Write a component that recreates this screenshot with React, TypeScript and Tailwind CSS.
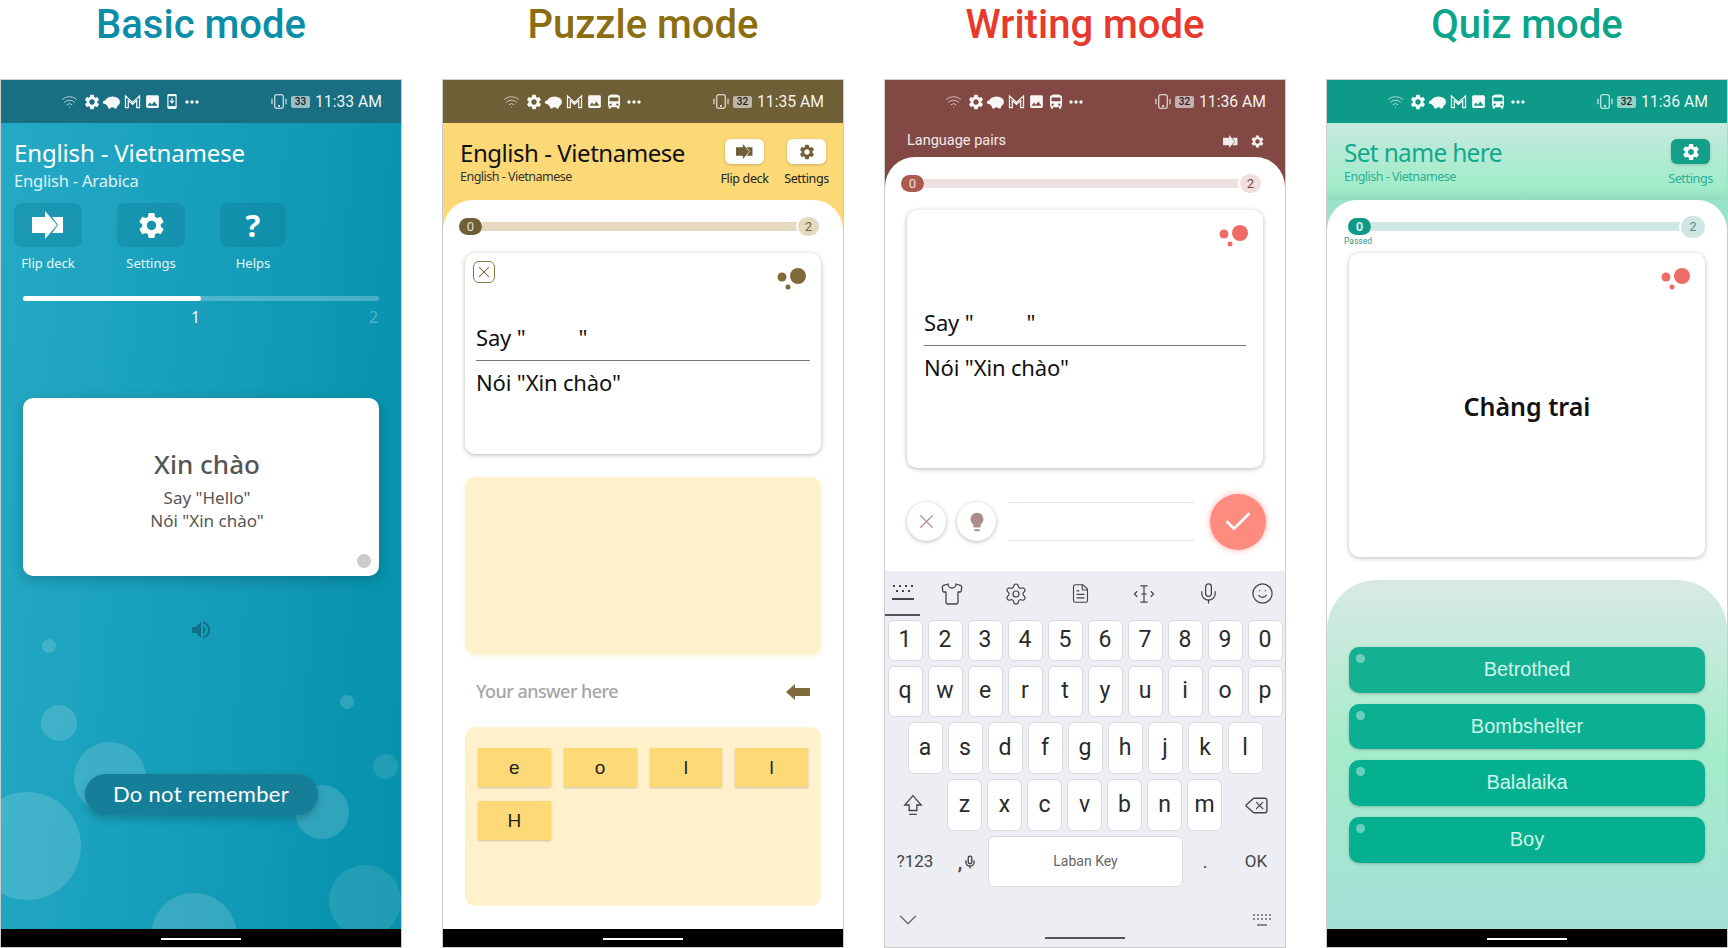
import { Check, ChevronDown, Delete, FileText, Mic, Settings as SettingsOutline, Shirt, Smile, Wifi, X } from 'lucide-react';
import { MdDirectionsBus, MdImage, MdLightbulb, MdMoreHoriz, MdSettings, MdVolumeUp } from 'react-icons/md';

function FlipIcon({ className }: { className?: string }) {
  return (
    <svg viewBox="0 0 32 28" fill="currentColor" className={className}>
      <path d="M0 6H13V0L25 14L13 28V22H0Z" />
      <path d="M20 6H31V22H20L26 14Z" />
    </svg>
  );
}

function MailIcon() {
  return (
    <svg viewBox="0 0 18 16" fill="none" stroke="currentColor" strokeWidth="1.3" className="w-[17px] h-[15px]">
      <path d="M1.5 14.5V2L9 9l7.5-7v12.5h-3V7L9 11 4.5 7v7.5z" />
    </svg>
  );
}

function PiggyIcon() {
  return (
    <svg viewBox="0 0 18 14" fill="currentColor" className="w-[18px] h-[14px]">
      <ellipse cx="9.5" cy="7" rx="7.5" ry="5.5" />
      <rect x="0" y="5.5" width="4" height="3.5" rx="1.5" />
      <rect x="5" y="10" width="3" height="3.5" rx="1" />
      <rect x="11" y="10" width="3" height="3.5" rx="1" />
    </svg>
  );
}

function DownloadPhoneIcon() {
  return (
    <svg viewBox="0 0 10 16" className="w-[10px] h-[15px]">
      <rect width="10" height="16" rx="1.5" fill="currentColor" />
      <rect x="1.3" y="2.3" width="7.4" height="10.6" fill="#1a6e82" />
      <path d="M5 4v5M3 7l2 2.5L7 7" stroke="currentColor" strokeWidth="1.2" fill="none" />
    </svg>
  );
}

function VibrateIcon() {
  return (
    <svg viewBox="0 0 20 16" fill="none" stroke="currentColor" strokeWidth="1.1" className="w-[20px] h-[15px]">
      <rect x="5.5" y="0.8" width="9" height="14.4" rx="1.5" />
      <path d="M2.5 5v6M17.5 5v6" />
      <circle cx="10" cy="12.8" r="0.5" fill="currentColor" />
    </svg>
  );
}

function StatusBar({ bg, level, time, download }: { bg: string; level: string; time: string; download?: boolean }) {
  const slot = 'w-5 flex items-center justify-center';
  return (
    <div className={`h-[43px] shrink-0 flex items-center justify-between pl-[58px] pr-[21px] text-white/95 font-['Roboto',sans-serif] ${bg}`}>
      <div className="flex items-center">
        <div className={`${slot} mr-[3px]`}>
          <Wifi size={17} strokeWidth={1.2} className="opacity-80" />
        </div>
        <div className={slot}>
          <MdSettings size={18} />
        </div>
        <div className={slot}>
          <PiggyIcon />
        </div>
        <div className={slot}>
          <MailIcon />
        </div>
        <div className={slot}>
          <MdImage size={17} />
        </div>
        <div className={slot}>{download ? <DownloadPhoneIcon /> : <MdDirectionsBus size={18} />}</div>
        <div className={slot}>
          <MdMoreHoriz size={22} />
        </div>
      </div>
      <div className="flex items-center">
        <VibrateIcon />
        <div className="ml-[2px] mr-[5px] w-[19px] h-[12px] rounded-[2px] bg-white/55 text-[#222] text-[10px] leading-[12px] font-medium text-center">{level}</div>
        <span className="w-[65px] text-[15.7px] leading-5 whitespace-nowrap">{time}</span>
      </div>
    </div>
  );
}

function Dots({ fill }: { fill: string }) {
  return (
    <svg viewBox="0 0 29 22" className={`absolute top-[15px] right-[15px] w-[29px] h-[22px] ${fill}`}>
      <circle cx="21" cy="8" r="8" />
      <circle cx="5" cy="9" r="4.5" />
      <circle cx="11" cy="19" r="2.5" />
    </svg>
  );
}

function Progress({ row, left, track, right }: { row: string; left: string; track: string; right: string }) {
  return (
    <div className={`flex items-center h-[19px] font-['Roboto',sans-serif] ${row}`}>
      <div className={`w-[23px] h-[17px] rounded-full text-[13px] leading-[17px] text-center text-white/80 ${left}`}>0</div>
      <div className={`flex-1 h-[9px] ${track}`} />
      <div className={`rounded-full ring-2 ring-white text-[13px] text-center z-10 shrink-0 ${right}`}>2</div>
    </div>
  );
}

function ClozeText() {
  return (
    <div className="text-[22px] leading-[30px] text-[#111] tracking-[-0.15px]">
      <div>
        Say "<span className="inline-block w-[53px]" />"
      </div>
      <div className="h-px bg-[#777] mt-2 mb-[6px]" />
      <div>Nói "Xin chào"</div>
    </div>
  );
}

function BasicPhone() {
  const buttons = [
    { label: 'Flip deck', width: 'w-[68px]', icon: <FlipIcon className="w-[32px] h-[28px]" /> },
    { label: 'Settings', width: 'w-[68px]', icon: <MdSettings size={31} /> },
    { label: 'Helps', width: 'w-[66px]', icon: <span className="text-[31px] leading-none font-bold">?</span> },
  ];
  return (
    <Phone>
      <StatusBar bg="bg-[#1a6e82]" level="33" time="11:33 AM" download />
      <div className="relative flex-1 overflow-hidden bg-[linear-gradient(95deg,#25aac6,#0690ac)] text-white">
        <div className="absolute left-[41px] top-[516px] size-[14px] rounded-full bg-white/15" />
        <div className="absolute left-[40px] top-[582px] size-[36px] rounded-full bg-white/15" />
        <div className="absolute left-[339px] top-[572px] size-[14px] rounded-full bg-white/15" />
        <div className="absolute left-[372px] top-[631px] size-[25px] rounded-full bg-white/10" />
        <div className="absolute left-[73px] top-[619px] size-[72px] rounded-full bg-white/15" />
        <div className="absolute left-[294px] top-[662px] size-[54px] rounded-full bg-white/15" />
        <div className="absolute left-[-28px] top-[669px] size-[108px] rounded-full bg-white/15" />
        <div className="absolute left-[328px] top-[742px] size-[72px] rounded-full bg-white/10" />
        <div className="absolute left-[150px] top-[770px] size-[86px] rounded-full bg-white/15" />

        <div className="relative px-[13px] pt-[15px]">
          <div className="text-[24px] leading-[30px] tracking-[-0.15px]">English - Vietnamese</div>
          <div className="mt-[2px] text-[16.5px] leading-[22px] text-white/85 tracking-[-0.2px]">English - Arabica</div>
          <div className="mt-[11px] flex gap-[35px]">
            {buttons.map((b) => (
              <div key={b.label} className={`flex flex-col items-center ${b.width}`}>
                <div className="w-full h-[44px] rounded-lg bg-[#0f7f99]/40 flex items-center justify-center">{b.icon}</div>
                <div className="mt-2 text-[13px] leading-4 text-white/90">{b.label}</div>
              </div>
            ))}
          </div>
        </div>

        <div className="relative mx-[22px] mt-[25px]">
          <div className="h-[5px] rounded-full bg-white/25">
            <div className="w-1/2 h-[5px] rounded-full bg-white" />
          </div>
          <div className="mt-[6px] flex justify-end text-[16px] leading-5">
            <span className="w-[178px] text-white/95">1</span>
            <span className="w-[5px] mr-[5px] text-white/30">2</span>
          </div>
        </div>

        <div className="relative mx-[22px] mt-[71px] h-[178px] rounded-[10px] bg-white pt-[50px] pl-3 text-center text-[#555] shadow-[0_4px_14px_rgba(0,0,0,0.2)]">
          <div className="text-[26px] leading-[32px] font-medium">Xin chào</div>
          <div className="mt-[6px] text-[17px] leading-[23px]">Say "Hello"</div>
          <div className="text-[17px] leading-[23px]">Nói "Xin chào"</div>
          <div className="absolute right-[8px] bottom-[8px] size-[14px] rounded-full bg-[#ccc]" />
        </div>

        <div className="relative mt-[42px] flex justify-center text-[#10708a]">
          <MdVolumeUp size={24} />
        </div>

        <div className="relative mt-[132px] mx-auto w-[233px] h-[41px] rounded-full bg-[#157f99] text-center text-[22px] leading-[40px] font-['Lato',sans-serif] tracking-[0.3px] shadow-[0_4px_8px_rgba(0,0,0,0.2)]">
          Do not remember
        </div>
      </div>
      <HomeBar />
    </Phone>
  );
}

function HomeBar() {
  return (
    <div className="h-[18px] shrink-0 bg-black flex justify-center pt-[9px]">
      <div className="w-20 h-[2px] bg-white" />
    </div>
  );
}

function HeaderButton({ label, className, labelColor, children }: { label: string; className: string; labelColor: string; children: React.ReactNode }) {
  return (
    <div className="w-[39px] flex flex-col items-center">
      <div className={`w-[39px] h-[25px] rounded-[6px] flex items-center justify-center shadow-[0_1px_3px_rgba(0,0,0,0.2)] ${className}`}>{children}</div>
      <div className={`mt-[7px] text-[12.5px] leading-4 whitespace-nowrap tracking-[-0.35px] ${labelColor}`}>{label}</div>
    </div>
  );
}

function PuzzlePhone() {
  const tiles = ['e', 'o', 'l', 'l', 'H'];
  return (
    <Phone>
      <StatusBar bg="bg-[#6f5f36]" level="32" time="11:35 AM" />
      <div className="flex-1 flex flex-col bg-[#fcd877] min-h-0">
        <div className="h-[77px] shrink-0 flex justify-between px-[17px]">
          <div className="pt-[15px]">
            <div className="text-[24px] leading-[30px] text-[#111] tracking-[-0.45px]">English - Vietnamese</div>
            <div className="text-[12.5px] leading-[18px] text-[#333] tracking-[-0.5px]">English - Vietnamese</div>
          </div>
          <div className="flex gap-[23px] pt-4">
            <HeaderButton label="Flip deck" className="bg-white text-[#6f5f36]" labelColor="text-[#222]">
              <FlipIcon className="w-[17px] h-[15px]" />
            </HeaderButton>
            <HeaderButton label="Settings" className="bg-white text-[#6f5f36]" labelColor="text-[#222]">
              <MdSettings size={18} />
            </HeaderButton>
          </div>
        </div>
        <div className="flex-1 rounded-t-[30px] bg-white pt-[17px]">
          <Progress row="ml-[16px] mr-[24px]" left="bg-[#6f5f36]" track="bg-[#e5dabf]" right="w-[21px] h-[19px] leading-[19px] bg-[#e5dabf] text-[#6f5f36]" />
          <div className="relative mx-[22px] mt-[17px] h-[201px] rounded-[10px] bg-white px-[11px] pt-[69px] shadow-[0_1px_5px_rgba(0,0,0,0.28)]">
            <div className="absolute left-2 top-2 size-[22px] rounded-[6px] border border-[#8a7845] flex items-center justify-center text-[#6f5f36]">
              <X size={18} strokeWidth={1.4} />
            </div>
            <Dots fill="fill-[#7f6b3a]" />
            <ClozeText />
          </div>
          <div className="mx-[22px] mt-[23px] h-[177px] rounded-[10px] bg-[#fff1cc] shadow-[0_2px_4px_rgba(253,225,150,0.4)]" />
          <div className="mx-[22px] h-[73px] flex items-center justify-between px-[11px] pt-[2px]">
            <span className="text-[18px] font-medium text-[#a5a5a5] tracking-[-0.55px]">Your answer here</span>
            <svg viewBox="0 0 24 16" className="w-6 h-4 fill-[#7f6b3a]">
              <path d="M0 8L9 0V4H24V12H9V16Z" />
            </svg>
          </div>
          <div className="mx-[22px] h-[179px] rounded-[10px] bg-[#fff1cc] px-[13px] pt-[21px] grid grid-cols-4 gap-x-[13px] gap-y-[14px] content-start">
            {tiles.map((t, i) => (
              <div key={i} className="h-[39px] bg-[#fdd977] shadow-[0_1px_2px_rgba(0,0,0,0.2)] text-center text-[19px] leading-[39px] text-[#222] font-['Liberation_Sans',sans-serif]">
                {t}
              </div>
            ))}
          </div>
        </div>
      </div>
      <HomeBar />
    </Phone>
  );
}

function Key({ children, h }: { children: React.ReactNode; h: string }) {
  return (
    <div className={`w-[35px] rounded-[6px] bg-white border border-[#d9dade] flex items-center justify-center text-[23px] text-[#2a2a2a] ${h}`}>{children}</div>
  );
}

function Keyboard() {
  return (
    <div className="mt-auto h-[376px] bg-[#eceef3] font-['Roboto',sans-serif] text-[#444]">
      <div className="h-[45px] flex items-center">
        <div className="w-[35px] h-[45px] flex items-center justify-center border-b-2 border-[#555]">
          <svg viewBox="0 0 24 18" className="w-6 h-[18px] fill-[#444]">
            <path d="M2 1h2v2H2zM8 1h2v2H8zM14 1h2v2h-2zM20 1h2v2h-2zM5 6h2v2H5zM11 6h2v2h-2zM17 6h2v2h-2zM1 14h22v2H1z" />
          </svg>
        </div>
        <div className="w-16 flex justify-center">
          <Shirt size={24} strokeWidth={1.3} />
        </div>
        <div className="w-16 flex justify-center">
          <SettingsOutline size={24} strokeWidth={1.2} />
        </div>
        <div className="w-16 flex justify-center">
          <FileText size={21} strokeWidth={1.3} />
        </div>
        <div className="w-16 flex justify-center">
          <svg viewBox="0 0 24 22" fill="none" stroke="currentColor" strokeWidth="1.3" className="w-[22px] h-5">
            <path d="M8 2h8M8 20h8M12 2v18M9 11h6M4.5 8L1.5 11l3 3M19.5 8l3 3-3 3" />
          </svg>
        </div>
        <div className="w-16 flex justify-center">
          <Mic size={23} strokeWidth={1.3} />
        </div>
        <div className="w-[45px] flex justify-center">
          <Smile size={23} strokeWidth={1.3} />
        </div>
      </div>
      <div className="mt-[4px] flex flex-col gap-[5px]">
        <div className="flex justify-center gap-[5px]">
          {'1234567890'.split('').map((k) => (
            <Key key={k} h="h-[41px]">
              {k}
            </Key>
          ))}
        </div>
        <div className="flex justify-center gap-[5px]">
          {'qwertyuiop'.split('').map((k) => (
            <Key key={k} h="h-[51px]">
              {k}
            </Key>
          ))}
        </div>
        <div className="flex justify-center gap-[5px]">
          {'asdfghjkl'.split('').map((k) => (
            <Key key={k} h="h-[52px]">
              {k}
            </Key>
          ))}
        </div>
        <div className="flex items-center">
          <div className="w-[62px] pr-[6px] flex justify-center">
            <svg viewBox="0 0 18 20" fill="none" stroke="currentColor" strokeWidth="1.2" className="w-5 h-[22px]">
              <path d="M9 1.5L1.5 10H5.5V15H12.5V10H16.5ZM5.5 18.5H12.5" />
            </svg>
          </div>
          <div className="flex gap-[5px]">
            {'zxcvbnm'.split('').map((k) => (
              <Key key={k} h="h-[52px]">
                {k}
              </Key>
            ))}
          </div>
          <div className="w-[63px] pl-[6px] flex justify-center">
            <Delete size={25} strokeWidth={1.3} />
          </div>
        </div>
        <div className="flex items-center h-[51px]">
          <div className="w-[57px] pl-[3px] text-center text-[17px]">?123</div>
          <div className="w-[46px] pl-[5px] flex justify-center items-center gap-px text-[20px] font-medium">
            ,
            <Mic size={14} strokeWidth={2.4} />
          </div>
          <div className="w-[195px] h-[51px] rounded-[6px] bg-white border border-[#d9dade] text-center text-[14px] leading-[49px] text-[#666]">Laban Key</div>
          <div className="w-[44px] text-center text-[18px]">.</div>
          <div className="w-[58px] text-center text-[17px]">OK</div>
        </div>
      </div>
      <div className="mt-[21px] h-[24px] flex items-center justify-between pl-[8px] pr-[14px]">
        <ChevronDown size={30} strokeWidth={1} className="text-[#666]" />
        <svg viewBox="0 0 18 12" className="w-[18px] h-3 fill-[#888]">
          <path d="M0 0h2v2H0zM4 0h2v2H4zM8 0h2v2H8zM12 0h2v2h-2zM16 0h2v2h-2zM0 4h2v2H0zM4 4h2v2H4zM8 4h2v2H8zM12 4h2v2h-2zM16 4h2v2h-2zM4 10h10v2H4z" />
        </svg>
      </div>
      <div className="mt-[5px] mx-auto w-20 h-[2px] bg-[#555]" />
    </div>
  );
}

function WritingPhone() {
  return (
    <Phone>
      <StatusBar bg="bg-[#824844]" level="32" time="11:36 AM" />
      <div className="flex-1 flex flex-col bg-[#824844] min-h-0">
        <div className="h-[34px] shrink-0 flex items-center justify-between pl-[22px] pr-[20px] pt-[2px] text-white/90">
          <span className="text-[14.5px] font-['Roboto',sans-serif]">Language pairs</span>
          <div className="flex items-center gap-[12px]">
            <FlipIcon className="w-[15px] h-[13px]" />
            <MdSettings size={15} />
          </div>
        </div>
        <div className="flex-1 flex flex-col rounded-t-[30px] bg-white pt-[17px]">
          <Progress row="ml-[16px] mr-[24px]" left="bg-[#ab5a50]" track="bg-[#f0dfe0]" right="w-[21px] h-[19px] leading-[19px] bg-[#f0dfe0] text-[#824844]" />
          <div className="relative mx-[22px] mt-[17px] h-[258px] rounded-[10px] bg-white px-[17px] pt-[97px] shadow-[0_1px_5px_rgba(0,0,0,0.28)]">
            <Dots fill="fill-[#ee6b67]" />
            <ClozeText />
          </div>
          <div className="mt-[25px] ml-[22px] mr-[19px] h-[57px] flex items-center">
            <div className="size-[39px] rounded-full bg-white flex items-center justify-center text-[#b78f8c] shadow-[0_1px_4px_rgba(0,0,0,0.28)]">
              <X size={23} strokeWidth={1.3} />
            </div>
            <div className="ml-[11px] size-[39px] rounded-full bg-white flex items-center justify-center text-[#ad8d8a] shadow-[0_1px_4px_rgba(0,0,0,0.28)]">
              <MdLightbulb size={22} />
            </div>
            <div className="ml-[13px] w-[185px] h-[39px] border-y border-[#f0dfe0]" />
            <div className="ml-4 size-[56px] rounded-full bg-[#ff8a80] flex items-center justify-center text-white shadow-[0_0_6px_rgba(255,138,128,0.7)]">
              <Check size={32} strokeWidth={2} />
            </div>
          </div>
          <Keyboard />
        </div>
      </div>
    </Phone>
  );
}

function QuizPhone() {
  const answers = [
    { text: 'Betrothed', bg: 'bg-[#13b092]' },
    { text: 'Bombshelter', bg: 'bg-[#0ab091]' },
    { text: 'Balalaika', bg: 'bg-[#05b091]' },
    { text: 'Boy', bg: 'bg-[#05b091]' },
  ];
  return (
    <Phone>
      <StatusBar bg="bg-[#0d9a88]" level="32" time="11:36 AM" />
      <div className="flex-1 flex flex-col bg-[#9be3c6] min-h-0">
        <div className="h-[77px] shrink-0 flex justify-between px-[17px] bg-[linear-gradient(180deg,#c6e9df,#a0ecc9_85%,#93dcc0)]">
          <div className="pt-[15px]">
            <div className="text-[24.5px] leading-[30px] text-[#13a88c] tracking-[-0.7px]">Set name here</div>
            <div className="text-[12.5px] leading-[18px] text-[#2bb093] tracking-[-0.5px]">English - Vietnamese</div>
          </div>
          <div className="pt-4">
            <HeaderButton label="Settings" className="bg-[#13a08a] text-white" labelColor="text-[#2bb093]">
              <MdSettings size={20} />
            </HeaderButton>
          </div>
        </div>
        <div className="flex-1 flex flex-col rounded-t-[30px] bg-white pt-[17px]">
          <div className="relative">
            <Progress row="ml-[21px] mr-[22px]" left="bg-[#0d9a88] font-bold" track="bg-[#d0e6e2]" right="w-6 h-[22px] leading-[22px] bg-[#d0e6e2] text-[#5b8a83]" />
            <span className="absolute left-[17px] top-[18px] text-[8.5px] leading-3 text-[#2a9a88] font-['Roboto',sans-serif]">Passed</span>
          </div>
          <div className="relative mx-[22px] mt-[17px] h-[304px] shrink-0 rounded-[10px] bg-white flex items-center justify-center pt-1 shadow-[0_1px_5px_rgba(0,0,0,0.28)]">
            <Dots fill="fill-[#ee6b67]" />
            <span className="text-[25px] font-semibold text-[#111]">Chàng trai</span>
          </div>
          <div className="mt-[23px] flex-1 rounded-t-[50px] bg-[linear-gradient(180deg,#d8e9e4,#a4ecca_50%,#a4e0d8)] px-[22px] pt-[67px] flex flex-col gap-[11.2px]">
            {answers.map((a) => (
              <div key={a.text} className={`relative h-[45.5px] rounded-[10px] text-center text-[20px] leading-[45px] text-[#d0f5ea] font-['Liberation_Sans',sans-serif] shadow-[0_1px_3px_rgba(0,0,0,0.2)] ${a.bg}`}>
                <div className="absolute left-[7px] top-[7px] size-[9px] rounded-full bg-white/40" />
                {a.text}
              </div>
            ))}
          </div>
        </div>
      </div>
      <HomeBar />
    </Phone>
  );
}

function Phone({ children }: { children: React.ReactNode }) {
  return <div className="h-[869px] flex flex-col border border-[#ccc] overflow-hidden">{children}</div>;
}

function Column({ title, color, children }: { title: string; color: string; children: React.ReactNode }) {
  return (
    <div className="w-[402px] shrink-0">
      <div className={`h-[79px] pb-[29px] flex items-center justify-center text-[40px] font-medium font-['Roboto',sans-serif] ${color}`}>{title}</div>
      {children}
    </div>
  );
}

export default function App() {
  return (
    <div className="w-[1728px] h-[948px] overflow-hidden bg-white flex gap-10 font-['Noto_Sans',sans-serif]">
      <Column title="Basic mode" color="text-[#0a8da8]">
        <BasicPhone />
      </Column>
      <Column title="Puzzle mode" color="text-[#8b6e12]">
        <PuzzlePhone />
      </Column>
      <Column title="Writing mode" color="text-[#e8392c]">
        <WritingPhone />
      </Column>
      <Column title="Quiz mode" color="text-[#0aa58a]">
        <QuizPhone />
      </Column>
    </div>
  );
}
